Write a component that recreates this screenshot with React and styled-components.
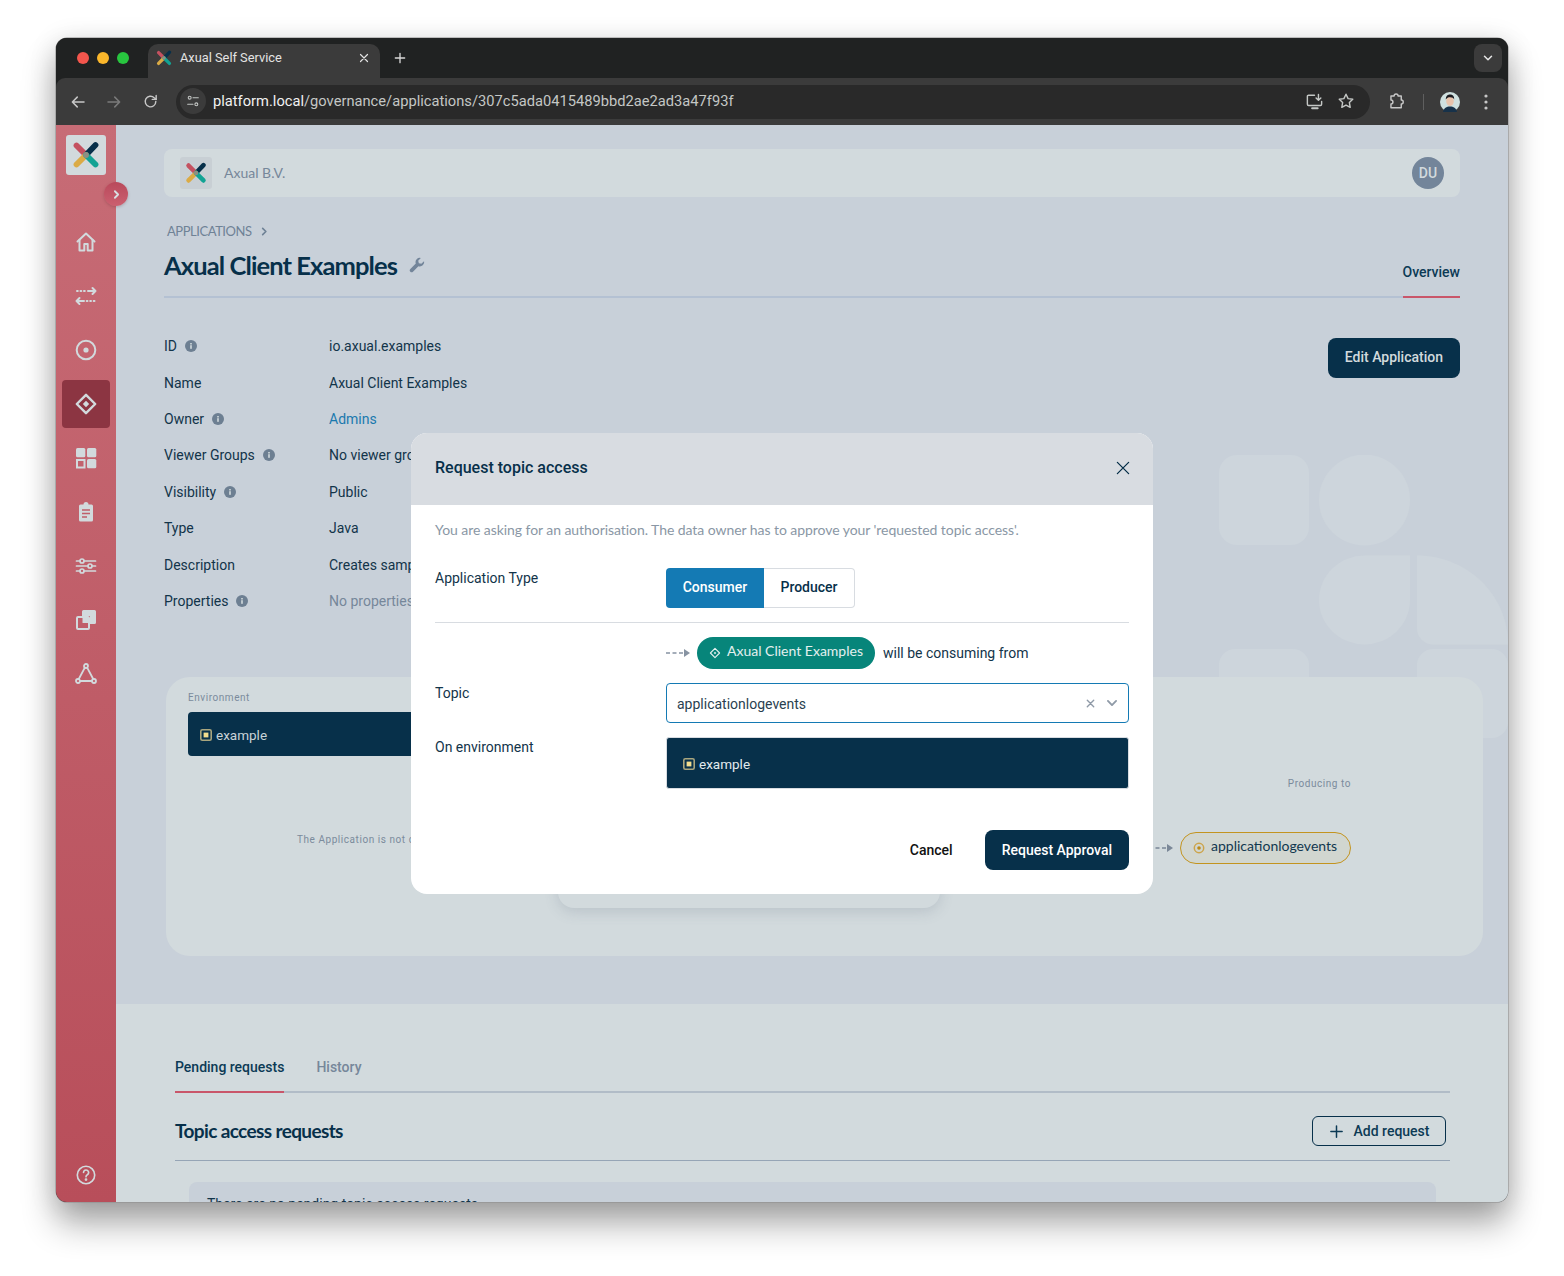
import React from 'react';
import styled, { createGlobalStyle } from 'styled-components';

const GlobalStyle = createGlobalStyle`
  html, body {
    margin: 0;
    padding: 0;
    background: #fff;
    font-family: Roboto, "Liberation Sans", sans-serif;
  }
  * { box-sizing: border-box; }
`;

const NAVY = '#07304a';
const Page = styled.div`
  width: 1564px;
  height: 1276px;
  padding: 38px 56px 74px;
  overflow: hidden;
`;

const Window = styled.div`
  position: relative;
  width: 1452px;
  height: 1164px;
  border-radius: 11px;
  overflow: hidden;
  display: flex;
  flex-direction: column;
  background: #202222;
  box-shadow: 0 0 0 0.5px #8c8c8c, 0 22px 34px rgba(0, 0, 0, 0.32), 0 4px 28px rgba(0, 0, 0, 0.14);
`;

/* browser chrome */
const TabStrip = styled.div`
  height: 40px;
  flex: none;
  background: #202222;
  display: flex;
  align-items: flex-end;
  padding-left: 21px;
`;
const Lights = styled.div`
  display: flex;
  gap: 8px;
  align-self: center;
`;
const Light = styled.span`
  width: 12px;
  height: 12px;
  border-radius: 50%;
  background: ${p => p.$c};
`;
const BrowserTab = styled.div`
  margin-left: 19px;
  width: 232px;
  height: 34px;
  background: #3b3b3b;
  border-radius: 10px 10px 0 0;
  display: flex;
  align-items: center;
  padding: 0 10px 6px 8px;
  color: #e3e3e3;
  font-size: 12.8px;
`;
const TabTitle = styled.span`
  margin-left: 8px;
  padding-bottom: 1px;
  flex: 1;
`;
const NewTab = styled.div`
  margin-left: 12px;
  height: 34px;
  padding-bottom: 6px;
  display: flex;
  align-items: center;
  color: #d8d8d8;
`;
const TabMenu = styled.div`
  margin-left: auto;
  margin-right: 6px;
  margin-bottom: 6px;
  width: 28px;
  height: 28px;
  border-radius: 8px;
  background: #3b3b3b;
  display: flex;
  align-items: center;
  justify-content: center;
  color: #e3e3e3;
`;
const Toolbar = styled.div`
  height: 47px;
  flex: none;
  background: #3b3b3b;
  border-radius: 9px 9px 0 0;
  display: flex;
  align-items: center;
  padding-left: 13px;
  color: #c7c7c7;
`;
const ToolIcon = styled.div`
  width: 18px;
  height: 18px;
  margin-left: ${p => p.$before ?? 0}px;
  margin-right: ${p => p.$gap ?? 18}px;
  display: flex;
  align-items: center;
  justify-content: center;
  opacity: ${p => (p.$dim ? 0.45 : 1)};
`;
const UrlBar = styled.div`
  width: 1194px;
  height: 34px;
  border-radius: 17px;
  background: #292929;
  display: flex;
  align-items: center;
  padding: 0 15px 1px 4px;
  font-size: 14.7px;
  color: #c4c7c5;
`;
const SiteBadge = styled.div`
  width: 26px;
  height: 26px;
  border-radius: 50%;
  background: #3b3b3b;
  display: flex;
  align-items: center;
  justify-content: center;
  margin-right: 7px;
`;
const Domain = styled.span`
  color: #f1f1f1;
`;
const UrlActions = styled.div`
  margin-left: auto;
  display: flex;
  gap: 13px;
  align-items: center;
`;
const ToolEnd = styled.div`
  display: flex;
  align-items: center;
  margin-left: 17px;
`;
const ToolDivider = styled.span`
  width: 1px;
  height: 16px;
  background: #5f5f5f;
  margin: 0 16px 0 17px;
`;

/* application */
const AppShell = styled.div`
  flex: 1;
  min-height: 0;
  display: flex;
`;
const Sidebar = styled.aside`
  position: relative;
  width: 60px;
  flex: none;
  background: linear-gradient(180deg, #c76c76 0%, #b84e5a 100%);
  display: flex;
  flex-direction: column;
  align-items: center;
  padding-top: 10px;
  color: #d2dadd;
`;
const LogoBox = styled.div`
  width: 40px;
  height: 40px;
  border-radius: 3px;
  background: #d2dadd;
  display: flex;
  align-items: center;
  justify-content: center;
  margin-bottom: 43px;
`;
const Toggle = styled.div`
  position: absolute;
  left: 48px;
  top: 57px;
  width: 24px;
  height: 24px;
  border-radius: 50%;
  background: linear-gradient(180deg, #b9495b, #cb6070);
  box-shadow: 0 1px 3px rgba(80, 30, 40, 0.25);
  display: flex;
  align-items: center;
  justify-content: center;
  color: #d8dfe2;
  z-index: 2;
`;
const NavItem = styled.div`
  width: 48px;
  height: 48px;
  margin-bottom: 6px;
  border-radius: 4px;
  background: ${p => (p.$active ? '#8c3542' : 'transparent')};
  display: flex;
  align-items: center;
  justify-content: center;
`;
const HelpItem = styled(NavItem)`
  margin-top: auto;
  margin-bottom: 3px;
`;
const Main = styled.main`
  flex: 1;
  min-width: 0;
  display: flex;
  flex-direction: column;
  overflow: hidden;
  background: #c8d0d9;
  color: #0c3046;
`;
const TopArea = styled.section`
  position: relative;
  flex: none;
  height: 879px;
  padding: 24px 48px 0;
`;
const Decor = styled.svg`
  position: absolute;
  right: 0;
  top: 330px;
`;
const OrgBar = styled.div`
  position: relative;
  height: 48px;
  border-radius: 8px;
  background: #d2dadd;
  display: flex;
  align-items: center;
  padding: 0 16px;
`;
const OrgLogo = styled.div`
  width: 32px;
  height: 32px;
  border-radius: 3px;
  background: #c8cfd4;
  display: flex;
  align-items: center;
  justify-content: center;
`;
const OrgName = styled.span`
  margin-left: 12px;
  padding-bottom: 1px;
  font: 400 14px Lato, sans-serif;
  color: #76879a;
`;
const Avatar = styled.div`
  margin-left: auto;
  width: 32px;
  height: 32px;
  border-radius: 50%;
  background: #73859a;
  color: #d2dadd;
  font-size: 14px;
  font-weight: 500;
  display: flex;
  align-items: center;
  justify-content: center;
`;
const Head = styled.div`
  position: relative;
  display: flex;
  justify-content: space-between;
  align-items: flex-end;
  margin-top: 25px;
  border-bottom: 2px solid #b4c1d3;
`;
const Crumb = styled.div`
  height: 18px;
  margin-left: 3px;
  display: flex;
  align-items: center;
  gap: 7px;
  font: 400 13px/18px Lato, sans-serif;
  letter-spacing: -0.45px;
  color: #6f8296;
`;
const Title = styled.h1`
  margin: 7px 0 13px;
  display: flex;
  align-items: center;
  gap: 12px;
  font: 700 25.5px/36px Lato, sans-serif;
  letter-spacing: -0.9px;
  color: ${NAVY};
`;
const TitleIcon = styled.span`
  display: flex;
  color: #73859a;
  margin-top: -1px;
`;
const HeadTab = styled.div`
  margin-bottom: -2px;
  padding-bottom: 14px;
  border-bottom: 2px solid #c9566a;
  font-size: 14px;
  font-weight: 500;
  line-height: 20px;
  color: #0c3a55;
`;
const DetailWrap = styled.div`
  position: relative;
  display: flex;
  justify-content: space-between;
  align-items: flex-start;
  margin-top: 30px;
`;
const DetailGrid = styled.dl`
  margin: 0;
  display: grid;
  grid-template-columns: 165px 400px;
  grid-auto-rows: 36.4px;
  align-items: center;
  font-size: 14px;
  color: #12344a;
`;
const Term = styled.dt`
  display: flex;
  align-items: center;
  gap: 8px;
`;
const Value = styled.dd`
  margin: 0;
  color: ${p => p.$c || 'inherit'};
`;
const PrimaryBtn = styled.button`
  height: 40px;
  padding: 0 17px;
  border: 0;
  border-radius: 8px;
  background: ${NAVY};
  color: ${p => p.$c || '#d2dadd'};
  font: 500 14px Roboto, sans-serif;
`;
const EditBtn = styled(PrimaryBtn)`
  margin-top: 10px;
  padding-bottom: 2px;
`;
const FlowPanel = styled.div`
  position: relative;
  margin: 58px -23px 0 2px;
  height: 279px;
  padding: 14px 22px 0;
  border-radius: 24px;
  background: #d2dadd;
`;
const SmallLabel = styled.div`
  font: 400 10px/14px Roboto, sans-serif;
  letter-spacing: 0.55px;
  color: #7b8b9c;
`;
const EnvBar = styled.div`
  margin-top: 7px;
  width: 420px;
  height: 44px;
  border-radius: 4px;
  background: ${NAVY};
  display: flex;
  align-items: center;
  gap: 4px;
  padding: 2px 0 0 12px;
  font-size: 13.5px;
  color: #c9d3d8;
`;
const EnvGlyph = styled.svg`
  flex: none;
  margin-top: -1px;
`;
const FlowRow = styled.div`
  display: flex;
  margin-top: 20px;
`;
const NoteSide = styled.div`
  width: 370px;
  padding: 57px 0 0 109px;
  white-space: nowrap;
`;
const AppCard = styled.div`
  width: 382px;
  height: 132px;
  border-radius: 16px;
  background: #d2dadd;
  box-shadow: 0 4px 14px rgba(90, 105, 125, 0.2);
`;
const TopicSide = styled.div`
  width: 411px;
  padding-top: 1px;
  display: flex;
  flex-direction: column;
  align-items: flex-end;
`;
const TopicLine = styled.div`
  margin-top: 41px;
  display: flex;
  align-items: center;
  gap: 7px;
`;
const TopicChip = styled.div`
  width: 171px;
  height: 32px;
  border: 1px solid #c3941f;
  border-radius: 16px;
  background: #d1d6d0;
  display: flex;
  align-items: center;
  gap: 6px;
  padding-left: 12px;
  font: 400 14px Lato, sans-serif;
  color: #12384f;
`;
const ChipLabel = styled.span`
  margin-top: -6px;
`;

/* requests */
const Requests = styled.section`
  flex: 1;
  min-height: 0;
  overflow: hidden;
  background: #d2dadd;
  padding: 53px 58px 0 59px;
`;
const TabRow = styled.div`
  display: flex;
  gap: 32px;
  border-bottom: 2px solid #b1bcc7;
`;
const ReqTab = styled.div`
  margin-bottom: -2px;
  padding-bottom: 14px;
  border-bottom: 2px solid ${p => (p.$active ? '#c9566a' : 'transparent')};
  font-size: 14px;
  font-weight: 500;
  line-height: 20px;
  color: ${p => (p.$active ? '#0c3a55' : '#76879a')};
`;
const ReqHead = styled.div`
  height: 68px;
  display: flex;
  align-items: center;
  justify-content: space-between;
  padding: 9px 4px 0 0;
  border-bottom: 1px solid #96a5b6;
`;
const ReqTitle = styled.h2`
  margin: 0 0 2px;
  font: 700 19px Lato, sans-serif;
  letter-spacing: -0.62px;
  color: ${NAVY};
`;
const OutlineBtn = styled.button`
  width: 134px;
  height: 30px;
  border: 1px solid ${NAVY};
  border-radius: 6px;
  background: transparent;
  display: flex;
  align-items: center;
  justify-content: center;
  gap: 10px;
  font: 500 14px Roboto, sans-serif;
  color: #0c3a55;
`;
const EmptyBox = styled.div`
  margin: 21px 14px 0;
  height: 60px;
  border-radius: 8px;
  background: #c8d0d9;
  padding: 12px 18px;
  font-size: 14px;
  line-height: 20px;
  color: #12344a;
`;

/* modal */
const Modal = styled.div`
  position: absolute;
  left: 355px;
  top: 395px;
  width: 742px;
  height: 461px;
  border-radius: 16px;
  background: #fff;
  overflow: hidden;
  color: #12344a;
  font-size: 14px;
  z-index: 5;
`;
const ModalHead = styled.div`
  height: 72px;
  background: #d8dce1;
  display: flex;
  align-items: center;
  justify-content: space-between;
  padding: 0 21px 4px 24px;
  font-size: 16px;
  font-weight: 500;
  color: ${NAVY};
`;
const CloseMark = styled.span`
  display: flex;
  margin-top: 2px;
`;
const ModalBody = styled.div`
  padding: 16px 24px 24px;
`;
const Intro = styled.p`
  margin: 0;
  font: 400 14px/18px Lato, sans-serif;
  letter-spacing: -0.06px;
  color: #8a97a5;
`;
const FormRow = styled.div`
  display: grid;
  grid-template-columns: 231px 1fr;
  margin-top: ${p => p.$mt ?? 14}px;
  line-height: 20px;
`;
const Segments = styled.div`
  display: flex;
  width: 189px;
  height: 40px;
`;
const Segment = styled.div`
  width: ${p => p.$w}px;
  padding-bottom: 2px;
  display: flex;
  align-items: center;
  justify-content: center;
  font-weight: 500;
  border-radius: ${p => (p.$active ? '4px 0 0 4px' : '0 4px 4px 0')};
  background: ${p => (p.$active ? '#147ab4' : '#fff')};
  color: ${p => (p.$active ? '#fff' : NAVY)};
  border: ${p => (p.$active ? '0' : '1px solid #d8dce1')};
  border-left: 0;
`;
const Divider = styled.hr`
  margin: 14px 0 0;
  border: 0;
  border-top: 1px solid #d8dce1;
`;
const FlowLine = styled.div`
  display: flex;
  align-items: center;
  height: 32px;
`;
const AppChip = styled.div`
  width: 178px;
  height: 32px;
  margin: 0 8px 0 7px;
  border-radius: 16px;
  background: #07857a;
  color: #e4f0ef;
  display: flex;
  align-items: center;
  gap: 6px;
  padding: 0 0 5px 12px;
  font: 400 14px Lato, sans-serif;
  white-space: nowrap;
`;
const ChipGlyph = styled.svg`
  margin-top: 5px;
`;
const SelectBox = styled.div`
  height: 40px;
  border: 1px solid #147ab4;
  border-radius: 4px;
  display: flex;
  align-items: center;
  padding: 0 9px 0 10px;
  color: #2a3f50;
`;
const SelectValue = styled.span`
  flex: 1;
  padding-top: 2px;
`;
const SelectTools = styled.div`
  display: flex;
  align-items: center;
  gap: 9px;
  color: #8f9aa7;
`;
const EnvBox = styled.div`
  height: 52px;
  border: 1px solid #d8dce1;
  border-radius: 3px;
  background: ${NAVY};
  color: #e3ebee;
  display: flex;
  align-items: center;
  gap: 4px;
  padding: 2px 0 0 16px;
  font-size: 13.5px;
`;
const ModalFoot = styled.div`
  margin-top: 41px;
  display: flex;
  justify-content: flex-end;
  align-items: center;
  gap: 32px;
`;
const CancelBtn = styled.button`
  padding: 0;
  border: 0;
  background: none;
  font: 500 14px Roboto, sans-serif;
  color: #111;
`;

const Logo = ({ size = 28 }) => (
  <svg width={size} height={size} viewBox="0 0 28 28" fill="none" strokeWidth="5.8" strokeLinecap="round">
    <path d="M4.5 4.5 14 14" stroke="#c45160" />
    <path d="M23.5 4 14 14" stroke="#07304a" />
    <path d="M4.5 23.5 14 14" stroke="#dbab45" />
    <path d="M23.5 23.5 14 14" stroke="#12a394" />
    <circle cx="14" cy="14" r="2.9" fill="#8d8f83" />
  </svg>
);

const Line = ({ children, size = 24, sw = 2, ...rest }) => (
  <svg width={size} height={size} viewBox="0 0 24 24" fill="none" stroke="currentColor" strokeWidth={sw} strokeLinecap="round" strokeLinejoin="round" {...rest}>
    {children}
  </svg>
);

const EnvIcon = () => (
  <EnvGlyph width="12" height="12" viewBox="0 0 12 12">
    <rect x="0.8" y="0.8" width="10.4" height="10.4" rx="1.5" fill="none" stroke="#aaa67e" strokeWidth="1.6" />
    <rect x="3.6" y="3.6" width="4.8" height="4.8" fill="#f2dd8e" />
  </EnvGlyph>
);

const InfoIcon = () => (
  <svg width="12" height="12" viewBox="0 0 12 12">
    <circle cx="6" cy="6" r="6" fill="#6d7f92" />
    <rect x="5.2" y="5.2" width="1.6" height="3.6" fill="#d2dadd" />
    <rect x="5.2" y="3" width="1.6" height="1.5" fill="#d2dadd" />
  </svg>
);

const DashedArrow = ({ color = '#7a8797' }) => (
  <svg width="24" height="10" viewBox="0 0 24 10" fill="none">
    <path d="M0 5h17" stroke={color} strokeWidth="1.6" strokeDasharray="4 2.5" />
    <path d="M18 1l6 4-6 4z" fill={color} />
  </svg>
);

const navIcons = [
  <Line key="home"><path d="M3.5 11.5 12 3.5l8.5 8" /><path d="M5.5 10v10.5h4.8v-6.5h3.4v6.5h4.8V10" /></Line>,
  <Line key="flow"><path d="M3 7h.8M6.500 7h.8M10 7h.8" /><path d="M14 7h7.500M18.500 4l3 3-3 3" /><path d="M20.500 17h-.8M17 17h-.8M13.500 17h-.8" /><path d="M10 17H2.500M5.500 14l-3 3 3 3" /></Line>,
  <Line key="topic"><circle cx="12" cy="12" r="9.3" /><circle cx="12" cy="12" r="2.6" fill="currentColor" stroke="none" /></Line>,
  <Line key="app"><path d="M12 2.8 21.2 12 12 21.2 2.8 12z" strokeWidth="2.4" /><path d="M12 8.8l3.2 3.2-3.2 3.2L8.8 12z" fill="currentColor" stroke="none" /></Line>,
  <svg key="grid" width="24" height="24" viewBox="0 0 24 24" fill="currentColor">
    <rect x="2" y="2" width="9.3" height="9.3" rx="1.5" />
    <rect x="13" y="2" width="9.3" height="9.3" rx="1.5" />
    <rect x="3" y="14" width="7.5" height="7.5" fill="none" stroke="currentColor" strokeWidth="2" />
    <rect x="13" y="13" width="9.3" height="9.3" rx="1.5" />
  </svg>,
  <svg key="clip" width="24" height="24" viewBox="0 0 24 24">
    <path fill="currentColor" d="M6.5 4.5h3a2.5 2.5 0 0 1 5 0h3A1.5 1.5 0 0 1 19 6v14a1.5 1.5 0 0 1-1.5 1.5h-11A1.5 1.5 0 0 1 5 20V6a1.5 1.5 0 0 1 1.5-1.5z" />
    <path stroke="#c05e6a" strokeWidth="1.5" d="M8 10h8M8 13.5h8M8 17h5" />
  </svg>,
  <Line key="sliders" sw={1.7}><path d="M2.500 7h3.500M10 7h11.500M2.500 12h11.500M18 12h3.500M2.500 17h3.500M10 17h11.500" /><circle cx="8" cy="7" r="2" /><circle cx="16" cy="12" r="2" /><circle cx="8" cy="17" r="2" /></Line>,
  <svg key="copy" width="24" height="24" viewBox="0 0 24 24">
    <path fill="currentColor" d="M8 3.5A1.5 1.5 0 0 1 9.5 2h11A1.5 1.5 0 0 1 22 3.5v11a1.5 1.5 0 0 1-1.5 1.5H16V8H8z" />
    <rect x="3" y="9" width="12" height="12" rx="1" fill="none" stroke="currentColor" strokeWidth="2" />
    <rect x="8.5" y="9" width="6" height="6" fill="currentColor" />
  </svg>,
  <Line key="tri" sw={1.8}><path d="M10.700 5.800 4.800 17M13.300 5.800 19.200 17M6 19h12" /><circle cx="12" cy="4" r="2" /><circle cx="4" cy="19" r="2" /><circle cx="20" cy="19" r="2" /></Line>,
];

const details = [
  ['ID', true, 'io.axual.examples'],
  ['Name', false, 'Axual Client Examples'],
  ['Owner', true, 'Admins', '#1a79ae'],
  ['Viewer Groups', true, 'No viewer groups'],
  ['Visibility', true, 'Public'],
  ['Type', false, 'Java'],
  ['Description', false, 'Creates sample data'],
  ['Properties', true, 'No properties', '#76879a'],
];

export default function App() {
  return (
    <Page>
      <GlobalStyle />
      <Window>
        <TabStrip>
          <Lights>
            <Light $c="#f4564d" />
            <Light $c="#fbb72b" />
            <Light $c="#28c63f" />
          </Lights>
          <BrowserTab>
            <Logo size={16} />
            <TabTitle>Axual Self Service</TabTitle>
            <Line size={12} sw={2.4}><path d="M5 5l14 14M19 5 5 19" /></Line>
          </BrowserTab>
          <NewTab><Line size={16}><path d="M12 5v14M5 12h14" /></Line></NewTab>
          <TabMenu><Line size={14} sw={2.6}><path d="m6 9 6 6 6-6" /></Line></TabMenu>
        </TabStrip>
        <Toolbar>
          <ToolIcon><Line size={18}><path d="M20 12H5M11 5.500 4.500 12l6.500 6.500" /></Line></ToolIcon>
          <ToolIcon $dim><Line size={18}><path d="M4 12h15M13 5.500l6.500 6.500-6.500 6.500" /></Line></ToolIcon>
          <ToolIcon $gap={17}><Line size={17}><path d="M19.500 12a7.500 7.500 0 1 1-2.300-5.400L20 9" /><path d="M20 3.500V9h-5.500" /></Line></ToolIcon>
          <UrlBar>
            <SiteBadge>
              <Line size={16} sw={1.6}><circle cx="7" cy="7" r="2.200" /><path d="M12 7h8M4 17h8" /><circle cx="17" cy="17" r="2.200" /></Line>
            </SiteBadge>
            <span><Domain>platform.local</Domain>/governance/applications/307c5ada0415489bbd2ae2ad3a47f93f</span>
            <UrlActions>
              <Line size={19} sw={1.8}><path d="M12 4H4.500A1.500 1.500 0 0 0 3 5.500v10A1.500 1.500 0 0 0 4.500 17h15a1.500 1.500 0 0 0 1.500-1.500V12" /><path d="M9 20.500h7" strokeWidth="2.500" /><path d="M17 3v7M14 7.500l3 3 3-3" /></Line>
              <Line size={18} sw={1.9}><path d="m12 3 2.800 5.800 6.200.9-4.500 4.400 1.100 6.300L12 17.400 6.400 20.400l1.100-6.300L3 9.700l6.200-.9z" /></Line>
            </UrlActions>
          </UrlBar>
          <ToolEnd>
            <Line size={19} sw={1.8}><path d="M5 5h4a2.500 2.500 0 0 1 5 0h4v5a2.500 2.500 0 0 1 0 5v5H5v-5a2.500 2.500 0 0 0 0-5z" /></Line>
            <ToolDivider />
            <svg width="20" height="20" viewBox="0 0 20 20">
              <circle cx="10" cy="10" r="10" fill="#cfe0df" />
              <path d="M3 20c.8-4 3.500-5.500 7-5.500s6.200 1.500 7 5.500z" fill="#17324a" />
              <ellipse cx="10" cy="9" rx="3.800" ry="4.900" fill="#e8c3ac" />
              <path d="M5.800 7.500C5.800 3.600 8 2.600 10.200 2.600c2.500 0 4.200 1.600 4 4.900-.8-1.500-1.800-2.200-4.200-2.200-1.800 0-3 .5-4.200 2.200z" fill="#1a1a1f" />
            </svg>
            <ToolIcon $gap={0} $before={17}>
              <svg width="4" height="16" viewBox="0 0 4 16" fill="currentColor"><circle cx="2" cy="2" r="1.600" /><circle cx="2" cy="8" r="1.600" /><circle cx="2" cy="14" r="1.600" /></svg>
            </ToolIcon>
          </ToolEnd>
        </Toolbar>
        <AppShell>
          <Sidebar>
            <LogoBox><Logo /></LogoBox>
            <Toggle><Line size={13} sw={3.400}><path d="m9 6 6 6-6 6" /></Line></Toggle>
            {navIcons.map((icon, i) => (
              <NavItem key={i} $active={i === 3}>{icon}</NavItem>
            ))}
            <HelpItem>
              <Line size={22} sw={1.800}><circle cx="12" cy="12" r="9.500" /><path d="M9.300 9.300a2.800 2.800 0 1 1 4.200 2.500c-1 .6-1.500 1.200-1.500 2.200" /><circle cx="12" cy="17" r=".6" fill="currentColor" /></Line>
            </HelpItem>
          </Sidebar>
          <Main>
            <TopArea>
              <Decor width="289" height="283" viewBox="0 0 289 283" fill="#cdd5dc">
                <rect x="0" y="0" width="90" height="90" rx="18" />
                <circle cx="145.500" cy="45" r="45.500" />
                <path d="M145.500 100.500H191V145a45.500 44.500 0 0 1-91 0 45.500 44.500 0 0 1 45.500-44.500z" />
                <path d="M198 100.500c50 0 91 39 91 89h-75a16 16 0 0 1-16-16z" />
                <rect x="0" y="194" width="90" height="89" rx="16" />
                <rect x="198" y="194" width="91" height="89" rx="16" />
              </Decor>
              <OrgBar>
                <OrgLogo><Logo size={22} /></OrgLogo>
                <OrgName>Axual B.V.</OrgName>
                <Avatar>DU</Avatar>
              </OrgBar>
              <Head>
                <div>
                  <Crumb>
                    APPLICATIONS
                    <Line size={11} sw={3.600}><path d="m8 5 7 7-7 7" /></Line>
                  </Crumb>
                  <Title>
                    Axual Client Examples
                    <TitleIcon>
                      <svg width="16" height="16" viewBox="0 0 24 24" fill="currentColor">
                        <path d="M22.500 6.200a6.400 6.400 0 0 1-8.400 7.600L6 22a2.800 2.800 0 0 1-4-4l8.200-8.100A6.400 6.400 0 0 1 17.800 1.500L13.800 5.500l1 3.700 3.700 1z" />
                      </svg>
                    </TitleIcon>
                  </Title>
                </div>
                <HeadTab>Overview</HeadTab>
              </Head>
              <DetailWrap>
                <DetailGrid>
                  {details.map(([name, info, value, color]) => (
                    <React.Fragment key={name}>
                      <Term>{name}{info && <InfoIcon />}</Term>
                      <Value $c={color}>{value}</Value>
                    </React.Fragment>
                  ))}
                </DetailGrid>
                <EditBtn>Edit Application</EditBtn>
              </DetailWrap>
              <FlowPanel>
                <SmallLabel>Environment</SmallLabel>
                <EnvBar><EnvIcon />example</EnvBar>
                <FlowRow>
                  <NoteSide><SmallLabel>The Application is not consuming</SmallLabel></NoteSide>
                  <AppCard />
                  <TopicSide>
                    <SmallLabel>Producing to</SmallLabel>
                    <TopicLine>
                      <DashedArrow />
                      <TopicChip>
                        <svg width="12" height="12" viewBox="0 0 12 12" fill="none">
                          <circle cx="6" cy="6" r="4.700" stroke="#cda44a" strokeWidth="1.500" />
                          <circle cx="6" cy="6" r="1.800" fill="#bb8a17" />
                        </svg>
                        <ChipLabel>applicationlogevents</ChipLabel>
                      </TopicChip>
                    </TopicLine>
                  </TopicSide>
                </FlowRow>
              </FlowPanel>
            </TopArea>
            <Requests>
              <TabRow>
                <ReqTab $active>Pending requests</ReqTab>
                <ReqTab>History</ReqTab>
              </TabRow>
              <ReqHead>
                <ReqTitle>Topic access requests</ReqTitle>
                <OutlineBtn>
                  <Line size={15} sw={2.400}><path d="M12 3v18M3 12h18" /></Line>
                  Add request
                </OutlineBtn>
              </ReqHead>
              <EmptyBox>There are no pending topic access requests</EmptyBox>
            </Requests>
          </Main>
        </AppShell>
        <Modal>
          <ModalHead>
            Request topic access
            <CloseMark>
              <Line size={18} sw={1.700}><path d="M4.500 4.500l15 15M19.500 4.500l-15 15" /></Line>
            </CloseMark>
          </ModalHead>
          <ModalBody>
            <Intro>You are asking for an authorisation. The data owner has to approve your 'requested topic access'.</Intro>
            <FormRow $mt={29}>
              <span>Application Type</span>
              <Segments>
                <Segment $active $w={98}>Consumer</Segment>
                <Segment $w={91}>Producer</Segment>
              </Segments>
            </FormRow>
            <Divider />
            <FormRow>
              <span />
              <FlowLine>
                <DashedArrow color="#8793a2" />
                <AppChip>
                  <ChipGlyph width="12" height="12" viewBox="0 0 24 24" fill="none" stroke="currentColor" strokeWidth="2.200" strokeLinejoin="round">
                    <path d="M12 2.800 21.200 12 12 21.200 2.800 12z" />
                    <path d="M12 9.500l2.500 2.500-2.500 2.500L9.500 12z" fill="currentColor" stroke="none" />
                  </ChipGlyph>
                  Axual Client Examples
                </AppChip>
                will be consuming from
              </FlowLine>
            </FormRow>
            <FormRow>
              <span>Topic</span>
              <SelectBox>
                <SelectValue>applicationlogevents</SelectValue>
                <SelectTools>
                  <Line size={11} sw={3}><path d="M5 5l14 14M19 5 5 19" /></Line>
                  <Line size={14} sw={3.200}><path d="m5 8.500 7 7 7-7" /></Line>
                </SelectTools>
              </SelectBox>
            </FormRow>
            <FormRow>
              <span>On environment</span>
              <EnvBox><EnvIcon />example</EnvBox>
            </FormRow>
            <ModalFoot>
              <CancelBtn>Cancel</CancelBtn>
              <PrimaryBtn $c="#fff">Request Approval</PrimaryBtn>
            </ModalFoot>
          </ModalBody>
        </Modal>
      </Window>
    </Page>
  );
}
